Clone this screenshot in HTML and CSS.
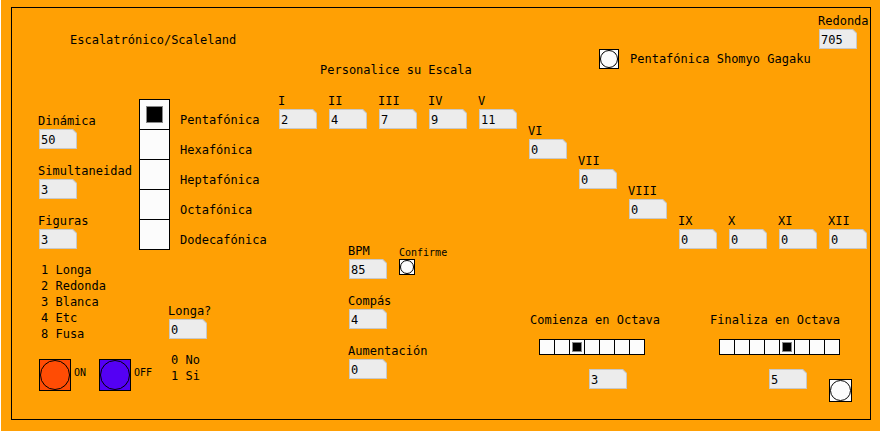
FILE: index.html
```html
<!DOCTYPE html>
<html lang="es">
<head>
<meta charset="utf-8">
<title>Escalatrónico/Scaleland</title>
<link rel="stylesheet" href="styles.css">
</head>
<body>
<div class="patch">
  <div class="frame">
    <header class="header">
      <h1 class="title">Escalatrónico/Scaleland</h1>
      <h2 class="subtitle">Personalice su Escala</h2>
      <div class="preset">
        <button class="bang bang-preset" id="shomyo" type="button" aria-labelledby="shomyo-label"></button>
        <label id="shomyo-label" for="shomyo">Pentafónica Shomyo Gagaku</label>
      </div>
      <div class="field"><label for="redonda">Redonda</label><input class="number" id="redonda" value="705"></div>
    </header>
    <main class="main">
      <section class="left">
        <div class="upper">
          <div class="stack settings">
            <div class="field"><label for="dinamica">Dinámica</label><input class="number" id="dinamica" value="50"></div>
            <div class="field"><label for="simultaneidad">Simultaneidad</label><input class="number" id="simultaneidad" value="3"></div>
            <div class="field"><label for="figuras">Figuras</label><input class="number" id="figuras" value="3"></div>
          </div>
          <div class="scales">
            <label class="scale"><input class="cell cell-large" type="radio" name="scale" checked>Pentafónica</label>
            <label class="scale"><input class="cell cell-large" type="radio" name="scale">Hexafónica</label>
            <label class="scale"><input class="cell cell-large" type="radio" name="scale">Heptafónica</label>
            <label class="scale"><input class="cell cell-large" type="radio" name="scale">Octafónica</label>
            <label class="scale"><input class="cell cell-large" type="radio" name="scale">Dodecafónica</label>
          </div>
        </div>
        <div class="lower">
          <div class="figures">
            <ul class="legend">
              <li>1 Longa</li>
              <li>2 Redonda</li>
              <li>3 Blanca</li>
              <li>4 Etc</li>
              <li>8 Fusa</li>
            </ul>
            <div class="power">
              <div class="switch"><button class="bang bang-power on" id="on" type="button"></button><label for="on">ON</label></div>
              <div class="switch"><button class="bang bang-power off" id="off" type="button"></button><label for="off">OFF</label></div>
            </div>
          </div>
          <div class="longa">
            <div class="field"><label for="longa">Longa?</label><input class="number" id="longa" value="0"></div>
            <ul class="legend">
              <li>0 No</li>
              <li>1 Si</li>
            </ul>
          </div>
        </div>
      </section>
      <section class="right">
        <div class="degrees">
          <div class="field"><label for="d1">I</label><input class="number" id="d1" value="2"></div>
          <div class="field"><label for="d2">II</label><input class="number" id="d2" value="4"></div>
          <div class="field"><label for="d3">III</label><input class="number" id="d3" value="7"></div>
          <div class="field"><label for="d4">IV</label><input class="number" id="d4" value="9"></div>
          <div class="field"><label for="d5">V</label><input class="number" id="d5" value="11"></div>
          <div class="field step-2"><label for="d6">VI</label><input class="number" id="d6" value="0"></div>
          <div class="field step-3"><label for="d7">VII</label><input class="number" id="d7" value="0"></div>
          <div class="field step-4"><label for="d8">VIII</label><input class="number" id="d8" value="0"></div>
          <div class="field step-5"><label for="d9">IX</label><input class="number" id="d9" value="0"></div>
          <div class="field step-5"><label for="d10">X</label><input class="number" id="d10" value="0"></div>
          <div class="field step-5"><label for="d11">XI</label><input class="number" id="d11" value="0"></div>
          <div class="field step-5"><label for="d12">XII</label><input class="number" id="d12" value="0"></div>
        </div>
        <div class="controls">
          <div class="stack tempo">
            <div class="field"><label for="bpm">BPM</label><input class="number" id="bpm" value="85"></div>
            <div class="field"><label for="compas">Compás</label><input class="number" id="compas" value="4"></div>
            <div class="field"><label for="aumentacion">Aumentación</label><input class="number" id="aumentacion" value="0"></div>
          </div>
          <div class="confirm">
            <label for="confirme">Confirme</label>
            <button class="bang bang-confirm" id="confirme" type="button"></button>
          </div>
          <fieldset class="octave">
            <legend>Comienza en Octava</legend>
            <div class="cells">
              <input class="cell" type="radio" name="start" aria-label="1">
              <input class="cell" type="radio" name="start" aria-label="2">
              <input class="cell" type="radio" name="start" aria-label="3" checked>
              <input class="cell" type="radio" name="start" aria-label="4">
              <input class="cell" type="radio" name="start" aria-label="5">
              <input class="cell" type="radio" name="start" aria-label="6">
              <input class="cell" type="radio" name="start" aria-label="7">
            </div>
            <div class="result"><input class="number" value="3" aria-label="Comienza en Octava"></div>
          </fieldset>
          <fieldset class="octave">
            <legend>Finaliza en Octava</legend>
            <div class="cells">
              <input class="cell" type="radio" name="end" aria-label="1">
              <input class="cell" type="radio" name="end" aria-label="2">
              <input class="cell" type="radio" name="end" aria-label="3">
              <input class="cell" type="radio" name="end" aria-label="4">
              <input class="cell" type="radio" name="end" aria-label="5" checked>
              <input class="cell" type="radio" name="end" aria-label="6">
              <input class="cell" type="radio" name="end" aria-label="7">
              <input class="cell" type="radio" name="end" aria-label="8">
            </div>
            <div class="result"><input class="number" value="5" aria-label="Finaliza en Octava"><button class="bang bang-send" type="button" aria-label="Bang"></button></div>
          </fieldset>
        </div>
      </section>
    </main>
  </div>
</div>
</body>
</html>
```
FILE: styles.css
```css
*,
*::before {
  box-sizing: border-box;
}

body {
  margin: 0;
  padding: 0 0 1px 1px;
  background: #fff;
  color: #000;
  font: 12px/16px "DejaVu Sans Mono", monospace;
  white-space: nowrap;
}

h1, h2, ul, fieldset, legend, input, button {
  margin: 0;
  padding: 0;
  border: 0;
  font: inherit;
  color: inherit;
}

ul {
  list-style: none;
}

.patch {
  display: flex;
  min-height: calc(100vh - 1px);
  padding: 7px 9px 11px 10px;
  background: #ffa004;
}

.frame {
  flex: 1;
  min-width: 0;
  border: 1px solid #000;
}

/* Header */
.header {
  display: grid;
  grid-template-columns: 250px 279px 218px auto;
  align-items: start;
  padding: 5px 0 15px 58px;
}

.title {
  margin-top: 19px;
}

.subtitle {
  margin-top: 49px;
}

.preset {
  display: flex;
  align-items: center;
  gap: 11px;
  margin-top: 36px;
}

/* Number boxes */
.field {
  display: flex;
  flex: none;
  flex-direction: column;
  width: 40px;
}

.field label {
  padding-left: 1px;
}

.number {
  display: block;
  width: 38px;
  height: 20px;
  padding: 2px 0 0 1px;
  border: 1px solid #c8c8c8;
  background: linear-gradient(225deg, #c8c8c8 2px, #ececec 3px);
  clip-path: polygon(0 0, 34px 0, 100% 4px, 100% 100%, 0 100%);
}

.field .number {
  margin-left: 2px;
}

.stack {
  display: flex;
  flex-direction: column;
  gap: 14px;
}

/* Bang buttons */
.bang {
  display: grid;
  flex: none;
  border: 1px solid #000;
  background: #fcfcfc;
}

.bang::before {
  content: "";
  border: 1px solid #000;
  border-radius: 50%;
}

.bang-preset {
  width: 20px;
  height: 20px;
}

.bang-power {
  width: 32px;
  height: 32px;
}

.bang-confirm {
  width: 16px;
  height: 16px;
}

.bang-send {
  width: 23px;
  height: 23px;
  margin: 10px 0 0 22px;
}

.on {
  background: #ff4c04;
}

.off {
  background: #5400f4;
}

/* Radio cells */
.cell {
  display: grid;
  flex: none;
  place-items: center;
  width: 16px;
  height: 16px;
  border: 1px solid #000;
  background: #fcfcfc;
  appearance: none;
}

.cell:checked::before {
  content: "";
  width: 10px;
  height: 10px;
  border: 1px solid #888;
  background: #000;
}

.cell-large {
  width: 31px;
  height: 31px;
}

.cell-large:checked::before {
  width: 17px;
  height: 17px;
}

.cells {
  display: flex;
}

.cells .cell + .cell {
  margin-left: -1px;
}

.scales {
  margin-top: 6px;
}

.scale {
  display: flex;
  align-items: flex-end;
  gap: 10px;
  line-height: 20px;
}

.scale + .scale {
  margin-top: -1px;
}

/* Left side */
.main {
  display: flex;
  padding-left: 25px;
}

.left {
  flex: none;
  width: 240px;
}

.upper,
.lower {
  display: flex;
}

.settings {
  width: 102px;
  padding-top: 20px;
}

.figures {
  width: 130px;
  padding-top: 12px;
}

.legend {
  padding-left: 4px;
}

.power {
  display: flex;
  gap: 4px;
  padding: 17px 0 0 2px;
}

.switch {
  display: flex;
  gap: 3px;
  width: 56px;
  font-size: 10px;
  line-height: 28px;
}

.longa {
  padding-top: 53px;
}

.longa .legend {
  padding-top: 13px;
}

/* Right side */
.right {
  flex: 1;
  min-width: 0;
}

/* Scale degrees descend in 30px steps */
.degrees {
  display: flex;
  align-items: flex-start;
  gap: 10px;
}

.step-2 {
  margin-top: 30px;
}

.step-3 {
  margin-top: 60px;
}

.step-4 {
  margin-top: 90px;
}

.step-5 {
  margin-top: 120px;
}

.controls {
  display: flex;
  margin-top: -6px;
  padding-left: 70px;
}

.tempo {
  width: 52px;
}

.confirm {
  width: 131px;
  padding-top: 4px;
  font-size: 10px;
  line-height: 12px;
}

.confirm label {
  display: block;
}

.octave {
  width: 180px;
  min-width: 0;
  padding-top: 69px;
}

.octave:last-child {
  width: 150px;
}

.octave legend {
  float: left;
  width: 100%;
}

.octave .cells {
  clear: both;
  padding: 11px 0 0 9px;
}

.result {
  display: flex;
  align-items: flex-start;
  padding: 14px 0 0 59px;
}
```
